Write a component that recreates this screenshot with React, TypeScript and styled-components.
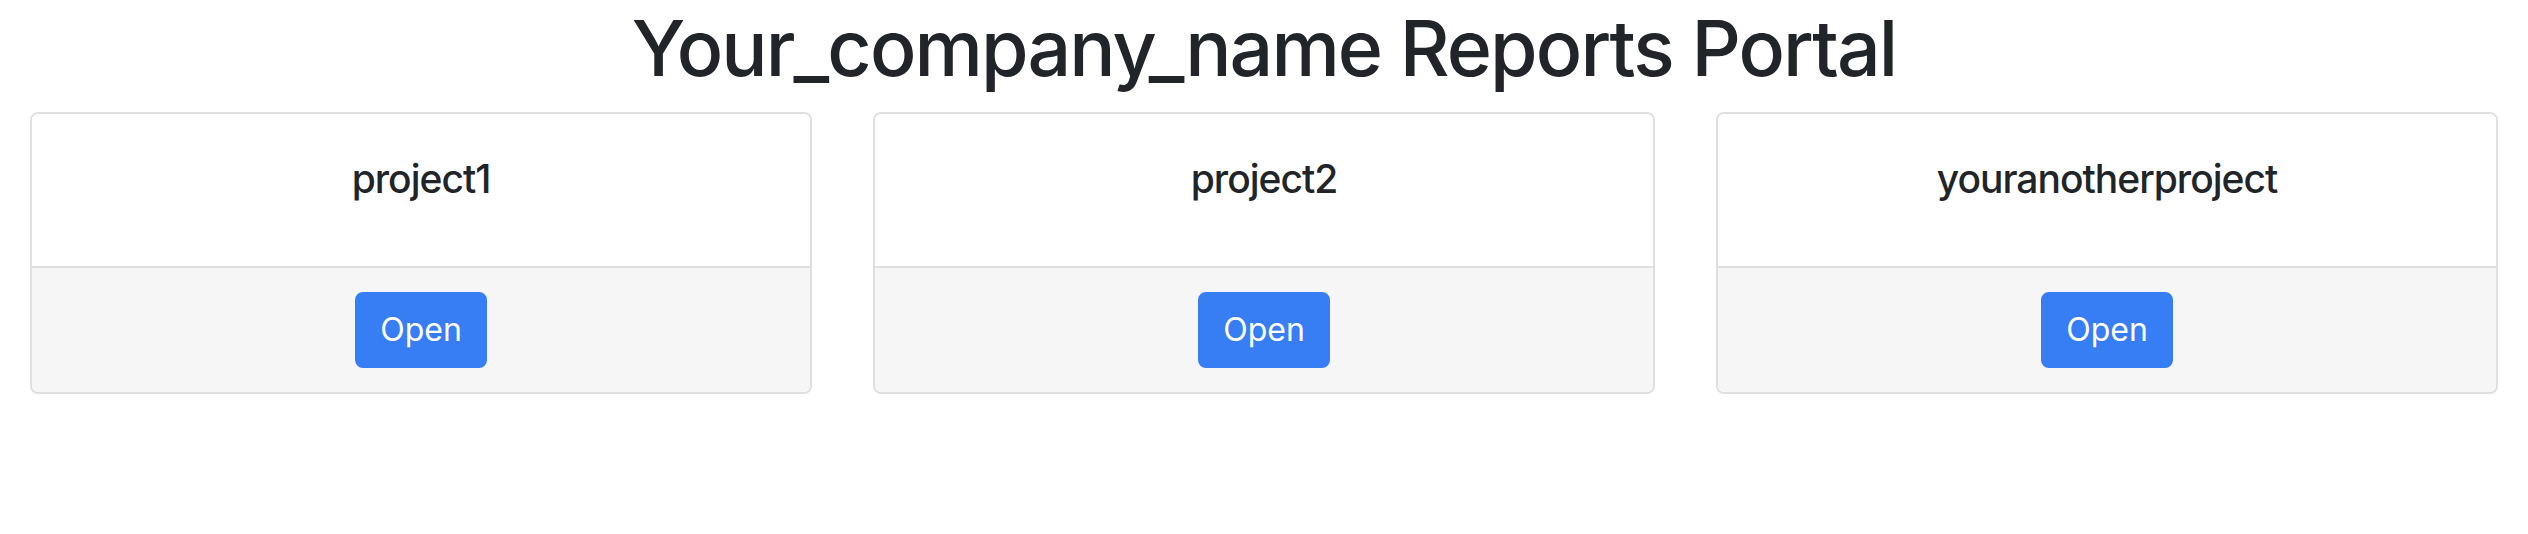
import React from "react";
import styled, { createGlobalStyle } from "styled-components";

const Global = createGlobalStyle`
  html, body { margin: 0; padding: 0; background: #fff; }
  body { font-family: Inter, "Noto Sans", sans-serif; color: #212529; }
`;

const Page = styled.div`
  padding: 0 30px;
`;

const Title = styled.h1`
  margin: 0 0 16px 0;
  text-align: center;
  font-size: 77px;
  font-weight: 500;
  letter-spacing: -1.9px;
  line-height: 96px;
  color: #212529;
`;

const Row = styled.div`
  display: grid;
  grid-template-columns: repeat(3, 1fr);
  column-gap: 61px;
`;

const Card = styled.div`
  border: 2px solid #dfdfdf;
  border-radius: 8px;
  overflow: hidden;
  display: flex;
  flex-direction: column;
`;

const CardBody = styled.div`
  padding: 37px 40px 59px;
  text-align: center;
  background: #fff;
`;

const CardTitle = styled.h5`
  margin: 0;
  font-size: 39px;
  font-weight: 500;
  letter-spacing: -1px;
  line-height: 56px;
`;

const CardFooter = styled.div`
  background: #f6f6f6;
  border-top: 2px solid #dfdfdf;
  padding: 24px 40px;
  display: flex;
  justify-content: center;
`;

const Button = styled.button`
  font-family: inherit;
  font-size: 32px;
  line-height: 48px;
  padding: 12px 23px;
  color: #fff;
  background: #377ef5;
  border: 2px solid #377ef5;
  border-radius: 8px;
  cursor: pointer;
`;

const projects = ["project1", "project2", "youranotherproject"];

export default function App() {
  return (
    <Page>
      <Global />
      <Title>Your_company_name Reports Portal</Title>
      <Row>
        {projects.map((p) => (
          <Card key={p}>
            <CardBody>
              <CardTitle>{p}</CardTitle>
            </CardBody>
            <CardFooter>
              <Button>Open</Button>
            </CardFooter>
          </Card>
        ))}
      </Row>
    </Page>
  );
}
